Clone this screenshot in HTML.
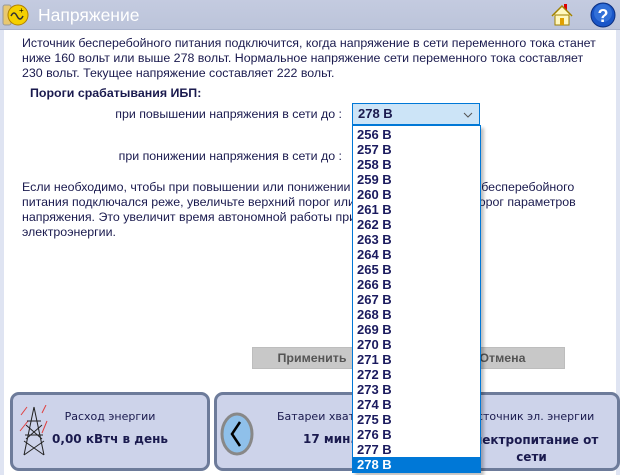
<!DOCTYPE html>
<html><head><meta charset="utf-8"><style>
*{margin:0;padding:0;box-sizing:border-box}
body{width:620px;height:475px;overflow:hidden;background:#fff;position:relative;font-family:"Liberation Sans",sans-serif;color:#1a1a4e;font-size:12.4px}
.hdr{position:absolute;left:0;top:0;width:620px;height:30px;background:linear-gradient(#c4cbe0,#bcc4da);border-bottom:1px solid #a9b3cc}
.hdr .t{position:absolute;left:38px;top:5px;font-size:17.5px;color:#fff}
.side{position:absolute;top:30px;width:4px;height:445px;background:#dfe4f2}
p.txt{position:absolute;left:22px;line-height:15px;white-space:nowrap}
.lbl{position:absolute;font-size:12.4px}
.sel{position:absolute;left:352px;top:103px;width:128px;height:22px;background:#cce4f7;border:1px solid #0078d7;font-weight:bold;font-size:13px;padding:2px 0 0 5px}
.list{position:absolute;left:352px;top:125px;width:129px;height:348px;background:#fff;border:1px solid #0078d7;box-shadow:3px 3px 3px rgba(0,0,0,.25);padding-top:1px}
.list div{height:15px;line-height:15px;font-size:13px;font-weight:bold;padding-left:4px;color:#1a1a5e}
.list .on{background:#0078d7;color:#fff}
.btn{position:absolute;top:347px;height:22px;background:#c8c8c8;border:1px solid #bdbdbd;text-align:center;line-height:20px;font-weight:bold;color:#555}
.card{position:absolute;top:392px;height:79px;background:#cdd3ea;border:3px solid #6d7b9a;border-radius:9px;font-family:"DejaVu Sans",sans-serif;font-size:11px;color:#1a1a4e;text-align:center}
.card .a{position:absolute;top:15px;left:0;right:0}
.card .b{position:absolute;top:37px;left:0;right:0;font-weight:bold;font-size:12px}
</style></head><body>
<div class="hdr">
<svg style="position:absolute;left:2px;top:2px" width="28" height="26"><rect x="1" y="3" width="8" height="20" rx="2" fill="#e8c870" stroke="#999"/><circle cx="16" cy="13" r="10" fill="#f5d000" stroke="#b08000"/><path d="M9 14q3-6 6 0t6 0" stroke="#333" fill="none" stroke-width="1.5"/><text x="17" y="11" font-size="8" font-family="Liberation Sans">+</text></svg>
<div class="t">Напряжение</div>
<svg style="position:absolute;left:550px;top:3px" width="24" height="24"><rect x="14" y="1" width="3" height="7" fill="#d00"/><path d="M2 13L12 3l10 10" fill="#fff8c0" stroke="#a08000" stroke-width="1.5"/><rect x="5" y="12" width="14" height="10" fill="#fff8c0" stroke="#a08000"/><rect x="10" y="15" width="4" height="7" fill="#e0a000"/></svg>
<svg style="position:absolute;left:590px;top:2px" width="26" height="26"><circle cx="13" cy="13" r="12" fill="#1a56c8" stroke="#0b2f80"/><circle cx="13" cy="11" r="9" fill="#4a8ae8" opacity=".5"/><text x="13" y="20" text-anchor="middle" font-size="18" font-weight="bold" fill="#fff" font-family="Liberation Sans">?</text></svg>
</div>
<div class="side" style="left:0"></div><div class="side" style="left:616px"></div>
<p class="txt" style="top:36px">Источник бесперебойного питания подключится, когда напряжение в сети переменного тока станет<br>ниже 160 вольт или выше 278 вольт. Нормальное напряжение сети переменного тока составляет<br>230 вольт. Текущее напряжение составляет 222 вольт.</p>
<div class="lbl" style="left:30px;top:86px;font-weight:bold">Пороги срабатывания ИБП:</div>
<div class="lbl" style="right:278px;top:107px">при повышении напряжения в сети до :</div>
<div class="lbl" style="right:278px;top:149px">при понижении напряжения в сети до :</div>
<p class="txt" style="top:180px">Если необходимо, чтобы при повышении или понижении напряжения источник бесперебойного<br>питания подключался реже, увеличьте верхний порог или уменьшите нижний порог параметров<br>напряжения. Это увеличит время автономной работы при перебоях в подаче<br>электроэнергии.</p>
<div class="btn" style="left:252px;width:120px">Применить</div>
<div class="btn" style="left:440px;width:125px">Отмена</div>
<div class="card" style="left:10px;width:200px"><svg style="position:absolute;left:5px;top:10px" width="32" height="52"><g stroke="#e04040" fill="none"><path d="M3 10l6-8M2 26l8-10M24 8l4-8M24 28l5-12"/></g><g stroke="#222" fill="none"><path d="M16 2L6 50M16 2l10 48M9 16h14M7 30h18M8 20l16 14M24 20L8 34M6 50l20-14M26 50L6 36"/></g></svg><div class="a">Расход энергии</div><div class="b">0,00 кВтч в день</div></div>
<div class="card" style="left:214px;width:200px"><svg style="position:absolute;left:3px;top:17px" width="34" height="44"><ellipse cx="17" cy="22" rx="15" ry="20" fill="#8fc0ea" stroke="#888" stroke-width="3"/><path d="M20 10l-8 12 8 12" stroke="#000" stroke-width="2.5" fill="none"/></svg><div class="a" style="padding-left:35px">Батареи хватит на</div><div class="b" style="padding-left:30px">17 мин.</div></div>
<div class="card" style="left:418px;width:202px"><div class="a" style="padding-left:25px">Источник эл. энергии</div><div class="b" style="padding-left:25px;line-height:17px;top:37px">Электропитание от<br>сети</div></div>
<div class="sel">278 В<svg style="position:absolute;right:6px;top:8px" width="10" height="6"><path d="M1 1l4 4 4-4" stroke="#555" fill="none"/></svg></div>
<div class="list">
<div>256 В</div><div>257 В</div><div>258 В</div><div>259 В</div><div>260 В</div><div>261 В</div><div>262 В</div><div>263 В</div><div>264 В</div><div>265 В</div><div>266 В</div><div>267 В</div><div>268 В</div><div>269 В</div><div>270 В</div><div>271 В</div><div>272 В</div><div>273 В</div><div>274 В</div><div>275 В</div><div>276 В</div><div>277 В</div><div class="on">278 В</div>
</div>
</body></html>
